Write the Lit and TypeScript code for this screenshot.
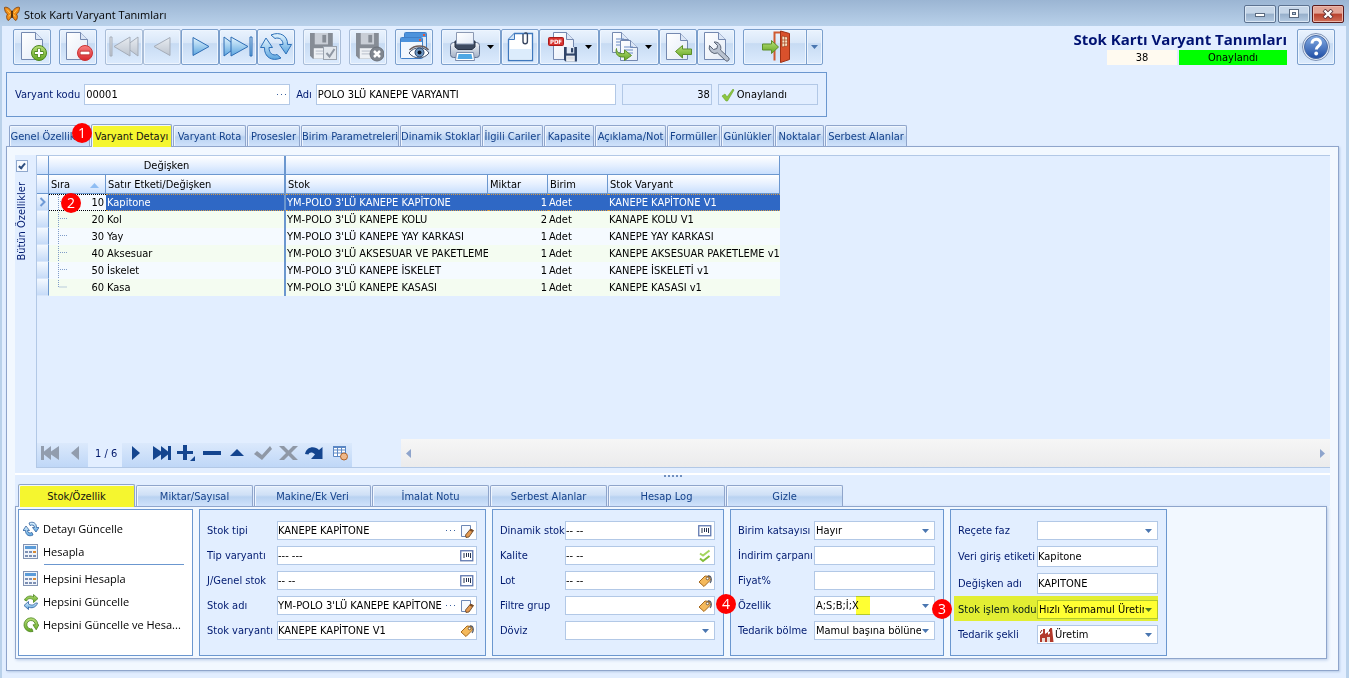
import { LitElement, html, svg, css, nothing } from "lit";
import type { TemplateResult } from "lit";
import { customElement, state } from "lit/decorators.js";
import { classMap } from "lit/directives/class-map.js";
import { styleMap } from "lit/directives/style-map.js";

/* ---------- icon library ---------- */

const icon = (w: number, h: number, body: unknown) =>
  html`<svg width=${w} height=${h} viewBox="0 0 ${w} ${h}" aria-hidden="true">${body}</svg>`;

const sheet = (x: number, y: number, w: number, h: number, fill = "url(#pg)") => svg`
  <path d="M${x} ${y}h${w - 7}l7 7v${h - 7}h-${w}z" fill=${fill} stroke="#7489b0" stroke-linejoin="round"/>
  <path d="M${x + w - 7} ${y}v7h7" fill="#dbe6f6" stroke="#7489b0" stroke-linejoin="round"/>`;

const defs = svg`<defs>
  <linearGradient id="pg" x2="1" y2="1"><stop stop-color="#fff"/><stop offset="1" stop-color="#e3ebf7"/></linearGradient>
  <linearGradient id="bl" x2="0" y2="1"><stop stop-color="#e4f5fe"/><stop offset="1" stop-color="#5ba5df"/></linearGradient>
  <linearGradient id="gr" x2="0" y2="1"><stop stop-color="#b9e07a"/><stop offset="1" stop-color="#63a621"/></linearGradient>
  <linearGradient id="gy" x2="0" y2="1"><stop stop-color="#e8ecf1"/><stop offset="1" stop-color="#bcc4cf"/></linearGradient>
  <linearGradient id="rd" x2="0" y2="1"><stop stop-color="#f98080"/><stop offset="1" stop-color="#d6262b"/></linearGradient>
  <linearGradient id="nv" x2="0" y2="1"><stop stop-color="#86aee4"/><stop offset="1" stop-color="#1f4ea6"/></linearGradient>
  <linearGradient id="pr" x2="0" y2="1"><stop stop-color="#f4f7fb"/><stop offset="1" stop-color="#a3b0c6"/></linearGradient>
</defs>`;

const floppy = (x: number, y: number, s: number, c: string, lite: string) => svg`
  <g transform="translate(${x} ${y}) scale(${s})">
    <path d="M0 0h24v27H3l-3-3z" fill=${c}/>
    <path d="M5 0h14v12H5z" fill=${lite}/><path d="M13 2h4v8h-4z" fill=${c}/>
    <path d="M4 16h16v11H4z" fill="#eef1f5"/><path d="M6 19h12M6 22h12" stroke="#b4bcc8"/>
  </g>`;

const I: Record<string, () => TemplateResult> = {
  add: () => icon(32, 32, svg`${defs}${sheet(5.5, 1.5, 21, 27)}
    <circle cx="23" cy="22" r="7.5" fill="url(#gr)" stroke="#4d8522"/>
    <path d="M23 17.500v9M18.500 22h9" stroke="#4d8522" stroke-width="4"/><path d="M23 18v8M19 22h8" stroke="#fff" stroke-width="2.200"/>`),
  remove: () => icon(32, 32, svg`${defs}${sheet(4.5, 1.5, 21, 27)}
    <circle cx="23" cy="22" r="7.500" fill="url(#rd)" stroke="#c33"/><path d="M18 22h10" stroke="#b22" stroke-width="4.500"/><path d="M18.500 22h9" stroke="#fff" stroke-width="2.800"/>`),
  first: () => icon(32, 32, svg`${defs}<g fill="url(#gy)" stroke="#a5adb9"><path d="M30 6v19L17 15.500z"/><path d="M22 6v19L6 15.500z"/><path d="M2 6h2v19H2z"/></g>`),
  prev: () => icon(32, 32, svg`${defs}<path d="M24 6.500v18L8 15.500z" fill="url(#gy)" stroke="#a5adb9"/>`),
  next: () => icon(32, 32, svg`${defs}<path d="M9 6.500v18l16-9z" fill="url(#bl)" stroke="#2e6db4"/>`),
  last: () => icon(32, 32, svg`${defs}<g fill="url(#bl)" stroke="#2e6db4"><path d="M2 6v19l13-9.500z"/><path d="M9 6v19l17-9.500z"/><path d="M28 6h2v19h-2z"/></g>`),
  refresh: () => icon(32, 32, svg`${defs}<g fill="url(#bl)" stroke="#2d70b8" stroke-linejoin="round">
    <path d="M11 4c9-4 17 1 16.500 9.500H31.500l-5.500 9.500-6.500-9.500h3.500c0-5-4-7.500-8-6z"/>
    <path d="M21 27C12 31 4 26 4.500 16.500H.5L6 7l6.500 9.500H9c0 6 4 8.500 8 7z"/></g>`),
  saveOk: () => icon(32, 32, svg`${floppy(4, 2, 0.95, "#868c95", "#c9ced6")}
    <rect x="17.500" y="15.500" width="13" height="13" fill="#e2e7ed" stroke="#9aa2ad"/><path d="M20.500 22l3 3.500 5-7.500" fill="none" stroke="#8f97a3" stroke-width="2"/>`),
  saveX: () => icon(32, 32, svg`${floppy(4, 2, 0.95, "#868c95", "#c9ced6")}
    <circle cx="25" cy="23" r="7" fill="#80868f" stroke="#6b717a"/><path d="M22 20l6 6m0-6l-6 6" stroke="#fff" stroke-width="2.500"/>`),
  preview: () => icon(32, 32, svg`${defs}<rect x="6.500" y="1.500" width="22" height="17" rx="1" fill="#d9e8fa" stroke="#3f7fc8"/><path d="M7 2h21v4H7z" fill="#4d93dc"/>
    <rect x="2.500" y="6.500" width="22" height="21" rx="1" fill="#f1f7fe" stroke="#3f7fc8"/><path d="M3 7h21v4H3z" fill="#4d93dc"/><path d="M25 3h2v2h-2zM21 8h2v2h-2z" fill="#e0573e"/>
    <path d="M11 22c5-7 16-7 20 0-5 6.500-15 6.500-20 0z" fill="#fff" stroke="#40506b"/><path d="M11.500 19c5-5.500 15-5.500 19 0" fill="none" stroke="#6d5e5c" stroke-width="1.500"/>
    <circle cx="21.500" cy="21.500" r="4.500" fill="#6a94bf" stroke="#24406a"/><circle cx="21.500" cy="21.500" r="2" fill="#0c1626"/>`),
  print: () => icon(32, 32, svg`${defs}<rect x="1.500" y="11.500" width="29" height="15" rx="3" fill="url(#pr)" stroke="#5f7090"/>
    <path d="M6 10h20v6l-3 2.500H9L6 16z" fill="#3d4a60" stroke="#2a3447"/><path d="M7.500 13V1.500h17V13z" fill="url(#pg)" stroke="#8b99b3"/>
    <path d="M7.500 21.500h17l1 8h-19z" fill="#fff" stroke="#7c8cab"/><path d="M9.500 23h13l1 5h-15z" fill="#4fa7e4"/>`),
  clip: () => icon(32, 32, svg`${defs}<path d="M4.500 8.500l6-6H28.500v27H4.500z" fill="#fff" stroke="#3f78bd" stroke-width="1.300"/><path d="M6 18h21.500v10.500H6z" fill="#dcecfc"/><path d="M4.500 8.500h6v-6" fill="#cfe3f7" stroke="#3f78bd"/>
    <path d="M19 3v7.500a2.200 2.200 0 0 0 4.400 0V3.500a1.600 1.600 0 0 0-3-.8" fill="none" stroke="#38465f" stroke-width="1.400"/>`),
  pdf: () => icon(32, 32, svg`${defs}${sheet(6.500, 1.500, 20, 27)}<rect x="1.500" y="6.500" width="15" height="8" rx="1" fill="#d8322e" stroke="#a81c1c"/>
    <text x="9" y="13" font-size="6" font-weight="700" fill="#fff" text-anchor="middle" font-family="DejaVu Sans Condensed, sans-serif">PDF</text>
    ${floppy(17, 16, 0.54, "#2f4468", "#dfe8f4")}`),
  copy: () => icon(32, 32, svg`${defs}${sheet(5.500, 1.500, 16, 20)}<path d="M9 8h8M9 11h8M9 14h8" stroke="#6b8cc4"/>${sheet(13.500, 9.500, 17, 20)}<path d="M17 16h9M17 19h9M17 22h9" stroke="#6b8cc4"/>
    <path d="M9.500 17.500c0 4 2 5.500 8 5v-3.500l7 5.500-7 5v-3.500c-7 .5-9.500-3-8-8.500z" fill="url(#gr)" stroke="#5c8f2a"/>`),
  import: () => icon(32, 32, svg`${defs}${sheet(4.500, 2.500, 21, 26)}<path d="M13.500 20.500l7-6v3.500h9v5.500h-9v3.500z" fill="url(#gr)" stroke="#5c8f2a"/>`),
  wrench: () => icon(32, 32, svg`${defs}${sheet(4.500, 1.500, 21, 27)}
    <path d="M14 11a6 6 0 0 1 6.500 8l8 7.500a2 2 0 0 1-3 3l-8-7.500a6 6 0 0 1-8-7.500l4 4 3.500-1 .5-3z" fill="#b9c2d0" stroke="#5a6476" stroke-linejoin="round"/>`),
  exit: () => icon(34, 34, svg`${defs}<path d="M16.500 30.500V2.500H24" fill="none" stroke="#cf5a31" stroke-width="2"/>
    <path d="M22.500 1l9 2.500v26l-9 3z" fill="#d9512c" stroke="#9e3216"/><path d="M24 6l5.500 1v9l-5.500 1z" fill="#f7e3c5" stroke="#a23a18" stroke-width=".7"/><path d="M26.700 6.500v10M24 10h5.500M24 13h5.500" stroke="#a23a18" stroke-width=".7"/>
    <path d="M20.500 17l-7-6.500V14h-9v6h9v3.500z" fill="url(#gr)" stroke="#5c8f2a"/>`),
  help: () => icon(32, 32, svg`${defs}<circle cx="16" cy="16" r="13.500" fill="#e4ecf7" stroke="#7d92b5"/><circle cx="16" cy="16" r="11.500" fill="url(#nv)" stroke="#4a6ba5"/>
    <path d="M12 12.500c0-5.500 8.500-5.500 8.500-.5 0 3-4.200 3.300-4.200 6.500" fill="none" stroke="#fff" stroke-width="3"/><circle cx="16.200" cy="22.500" r="1.900" fill="#fff"/>`),
  app: () => icon(16, 16, svg`<path d="M8 6C6 2 2 .5.500 1.500c0 3 1 5.500 3 6.500-1.500 2-1 5 .5 6.500C6 14 7.500 11 8 8.500 8.500 11 10 14 12 14.500c1.500-1.500 2-4.500.5-6.500 2-1 3-3.500 3-6.500C14 .5 10 2 8 6z" fill="#f08d17" stroke="#7a3c08" stroke-width=".8"/>
    <path d="M3 3.500l3 3.500M13 3.500L10 7M5 10.500l1.500-2M11 10.500l-1.500-2" stroke="#ffcf5c"/><path d="M8 5v7" stroke="#3b2208" stroke-width="1.500"/>`),
  check: () => icon(14, 14, svg`<path d="M1 8l3-2 2 3 6-8 1 1-6.500 11H5z" fill="#8cc63f" stroke="#6aa52b" stroke-width=".6"/>`),
  edit: () => icon(14, 14, svg`<path d="M1.500 1.500h9v7l-3 4h-6z" fill="#f7faff" stroke="#6d87b5"/><path d="M5.500 11l5-6 3 1.500-4.500 6.500-3 .5z" fill="#e39a52" stroke="#5d3b1d" stroke-width=".8"/><path d="M10.500 5l3 1.500-1 1.500-3-1.500z" fill="#7a4b24"/>`),
  code: () => icon(14, 14, svg`<rect x=".75" y="1.750" width="12" height="10" fill="#fff" stroke="#5f78b0" stroke-width="1.300"/><path d="M4 4v5M6.500 4v4M8.500 4v4M10.500 4v5" stroke="#26324d"/>`),
  tag: () => icon(14, 14, svg`<path d="M1 8l6-6 4.500.5 1 3.500-6.500 6.500z" fill="#f4b95c" stroke="#a5681c" stroke-linejoin="round"/><circle cx="9.500" cy="4.500" r="1.300" fill="#fff" stroke="#5d4630" stroke-width=".8"/><path d="M10 2c3-1 4.500 4 2 7" fill="none" stroke="#4c5566" stroke-width="1.100"/>`),
  checks: () => icon(14, 14, svg`<path d="M2 4.500l3 2 6.500-5" fill="none" stroke="#a4d65e" stroke-width="2"/><path d="M2 9.500l3 2.500 6.500-5" fill="none" stroke="#82bd3b" stroke-width="2"/>`),
  factory: () => icon(14, 14, svg`<path d="M0 14V7l3-2V1h2v5l3-2v3l2-2V0h2l1.500 14z" fill="#b2392b"/><path d="M2 10h3v4H2zM7 9h3v5H7z" fill="#e9d9d3"/><path d="M2 2L0 5M10 1L9 4" stroke="#7a1d14"/>`),
  mSync: () => icon(16, 16, svg`${defs}<g fill="url(#bl)" stroke="#2d5f9e" stroke-width=".8"><path d="M6 2c4-2 7.500 0 7.500 4.500H16L13 11 9.500 6.500h2C11.500 4 9 3.500 7 4.500z"/><path d="M10 14c-4 2-7.500 0-7.500-4.500H0L3 5l3.500 4.500h-2C4.500 12 7 12.500 9 11.500z"/></g>`),
  mCalc: () => icon(16, 16, svg`<rect x=".5" y=".5" width="14" height="14" fill="#f0f4fa" stroke="#8193b3"/><path d="M2 2h11v3H2z" fill="#5b9bd8"/><g fill="#7d8fb3"><path d="M2 7h3v2H2zM6 7h3v2H6zM2 11h3v2H2zM6 11h3v2H6zM10 11h3v2h-3z"/></g><path d="M10 7h3v2h-3z" fill="#d88a35"/>`),
  mSwap: () => icon(16, 16, svg`${defs}<path d="M1.500 6C3 2 8 1 10.500 3V.5L15 4.500l-4.500 4V6C8 4 5 4 3.500 7z" fill="url(#gr)" stroke="#4d8522" stroke-width=".8"/><path d="M14.500 9c-1.500 5-6.500 5.500-9 4v2.500L1 11.500l4.500-4V10c2.500 1.500 5.500 1.500 7-1z" fill="url(#bl)" stroke="#2d5f9e" stroke-width=".8"/>`),
  mRound: () => icon(16, 16, svg`${defs}<path d="M8 .8a7 7 0 1 0 2 13.700l-1-2.700a4.200 4.200 0 1 1 3.200-4H10l3.200 5 2.700-5h-1A7 7 0 0 0 8 .8z" fill="url(#gr)" stroke="#4d8522" stroke-width=".8"/>`),
};

/* record navigator glyphs, drawn on a 22x18 cell */
const NAV: Record<string, unknown> = {
  first: svg`<path d="M2 2h3v5.500L12 2v5.500L20 2v14l-8-5.500V16l-7-5.500V16H2z" fill="#929dae"/>`,
  prev: svg`<path d="M15 2v14L7 9z" fill="#929dae"/>`,
  next: svg`<path d="M8 2v14l8-7z" fill="#14458f"/>`,
  last: svg`<path d="M21 2h-3v5.500L11 2v5.500L3 2v14l8-5.500V16l7-5.500V16h3z" fill="#14458f"/>`,
  plus: svg`<path d="M8 1h4v6h6v3h-6v6H8v-6H2V7h6z" fill="#14458f"/><path d="M20 12v5h-5z" fill="#14458f"/>`,
  minus: svg`<path d="M2 7h18v4H2z" fill="#14458f"/>`,
  up: svg`<path d="M4 12l7-7 7 7z" fill="#14458f"/>`,
  ok: svg`<path d="M2 10l3-3 5 4 8-9 2 3-10 11z" fill="#8f98a6"/>`,
  cancel: svg`<path d="M2 2h5l4.500 4.500L16 2h5l-7 7 7 7h-5l-4.500-4.500L7 16H2l7-7z" fill="#8f98a6"/>`,
  redo: svg`<path d="M2 10c2-8 10-8 14-4l3.500-3v12H8l4-4.500c-3-3-6-2-6.500 0z" fill="#14458f"/>`,
  layout: svg`<path d="M5.500 2.500h12v10h-12zM5.500 6h12M9.500 3v9M13.500 3v9M6 9h12" fill="#fff" stroke="#5b87c4"/><path d="M5 2h13v2H5z" fill="#5b87c4"/><circle cx="16" cy="12.500" r="3.500" fill="#f0b98a" stroke="#b0642a"/>`,
};

/* ---------- data ---------- */

type Field = {
  label: string;
  value: string;
  kind: "text" | "pick" | "select";
  icon?: string;
  dots?: boolean;
  lead?: string;
  mark?: boolean;
  hot?: boolean;
};

const MAIN_TABS: [string, number][] = [
  ["Genel Özellikler", 81], ["Varyant Detayı", 81], ["Varyant Rota", 73], ["Prosesler", 53],
  ["Birim Parametreleri", 98], ["Dinamik Stoklar", 81], ["İlgili Cariler", 61], ["Kapasite", 50],
  ["Açıklama/Not", 71], ["Formüller", 53], ["Günlükler", 53], ["Noktalar", 49], ["Serbest Alanlar", 82],
];

const DETAIL_TABS = ["Stok/Özellik", "Miktar/Sayısal", "Makine/Ek Veri", "İmalat Notu", "Serbest Alanlar", "Hesap Log", "Gizle"];

const ROWS: [number, string, string, number, string, string][] = [
  [10, "Kapitone", "YM-POLO 3'LÜ KANEPE KAPİTONE", 1, "Adet", "KANEPE KAPİTONE V1"],
  [20, "Kol", "YM-POLO 3'LÜ KANEPE KOLU", 2, "Adet", "KANAPE KOLU V1"],
  [30, "Yay", "YM-POLO 3'LÜ KANEPE YAY KARKASI", 1, "Adet", "KANEPE YAY KARKASI"],
  [40, "Aksesuar", "YM-POLO 3'LÜ AKSESUAR VE PAKETLEME", 1, "Adet", "KANEPE AKSESUAR PAKETLEME v1"],
  [50, "İskelet", "YM-POLO 3'LÜ KANEPE İSKELET", 1, "Adet", "KANEPE İSKELETİ v1"],
  [60, "Kasa", "YM-POLO 3'LÜ KANEPE KASASI", 1, "Adet", "KANEPE KASASI v1"],
];

const MENU: ([string, string] | null)[] = [
  ["mSync", "Detayı Güncelle"], ["mCalc", "Hesapla"], null,
  ["mCalc", "Hepsini Hesapla"], ["mSwap", "Hepsini Güncelle"], ["mRound", "Hepsini Güncelle ve Hesa..."],
];

const PANELS: { cls: string; step?: number; fields: Field[] }[] = [
  { cls: "p1", fields: [
    { label: "Stok tipi", value: "KANEPE KAPİTONE", kind: "pick", icon: "edit", dots: true },
    { label: "Tip varyantı", value: "--- ---", kind: "pick", icon: "code" },
    { label: "J/Genel stok", value: "-- --", kind: "pick", icon: "code" },
    { label: "Stok adı", value: "YM-POLO 3'LÜ KANEPE KAPİTONE", kind: "pick", icon: "edit", dots: true },
    { label: "Stok varyantı", value: "KANEPE KAPİTONE V1", kind: "pick", icon: "tag" },
  ] },
  { cls: "p2", fields: [
    { label: "Dinamik stok", value: "-- --", kind: "pick", icon: "code" },
    { label: "Kalite", value: "-- --", kind: "pick", icon: "checks" },
    { label: "Lot", value: "-- --", kind: "pick", icon: "tag" },
    { label: "Filtre grup", value: "", kind: "pick", icon: "tag" },
    { label: "Döviz", value: "", kind: "select" },
  ] },
  { cls: "p3", step: 4, fields: [
    { label: "Birim katsayısı", value: "Hayır", kind: "select" },
    { label: "İndirim çarpanı", value: "", kind: "text" },
    { label: "Fiyat%", value: "", kind: "text" },
    { label: "Özellik", value: "A;S;B;İ;X", kind: "select", mark: true },
    { label: "Tedarik bölme", value: "Mamul başına bölüne", kind: "select" },
  ] },
  { cls: "p4", step: 3, fields: [
    { label: "Reçete faz", value: "", kind: "select" },
    { label: "Veri giriş etiketi", value: "Kapitone", kind: "text" },
    { label: "Değişken adı", value: "KAPITONE", kind: "text" },
    { label: "Stok işlem kodu", value: "Hızlı Yarımamul Üretir", kind: "select", hot: true },
    { label: "Tedarik şekli", value: "Üretim", kind: "select", lead: "factory" },
  ] },
];

type Tool = { id: string; name: string; off?: boolean; menu?: boolean };
const TOOLS: Tool[][] = [
  [{ id: "add", name: "Yeni" }],
  [{ id: "remove", name: "Sil" }],
  [{ id: "first", name: "İlk", off: true }, { id: "prev", name: "Önceki", off: true }, { id: "next", name: "Sonraki" }, { id: "last", name: "Son" }, { id: "refresh", name: "Yenile" }],
  [{ id: "saveOk", name: "Kaydet", off: true }],
  [{ id: "saveX", name: "Vazgeç", off: true }],
  [{ id: "preview", name: "Önizleme" }],
  [{ id: "print", name: "Yazdır", menu: true }, { id: "clip", name: "Ekler" }, { id: "pdf", name: "PDF", menu: true }, { id: "copy", name: "Kopyala", menu: true }, { id: "import", name: "Aktar" }, { id: "wrench", name: "Ayarlar" }],
];

const caret = (cls: string) => html`<svg class=${cls} width="7" height="4" viewBox="0 0 7 4" aria-hidden="true"><path d="M0 0h7L3.500 4z" fill="currentColor"/></svg>`;

const ellipsis = () => html`<svg width="9" height="2" viewBox="0 0 9 2" aria-hidden="true"><path d="M0 0h1v1H0zM4 0h1v1H4zM8 0h1v1H8z" fill="#3c62a0"/></svg>`;

@customElement("app-root")
export class AppRoot extends LitElement {
  static styles = css`
    :host {
      display: flex;
      flex-direction: column;
      min-height: 100vh;
      box-sizing: border-box;
      font: 11px/14px "DejaVu Sans Condensed", "DejaVu Sans", sans-serif;
      color: #000;
      background: #e2eeff;
      --line: #6b97cf;
      --soft: #b2c8e6;
      --frame: #8fa5cb;
      --ink: #001a70;
    }
    *, *::before, *::after { box-sizing: border-box; }
    svg { display: block; flex: none; }
    button, input, select { font: inherit; color: inherit; margin: 0; padding: 0; border: 0; background: none; border-radius: 0; }

    .titlebar { display: flex; align-items: center; height: 26px; padding: 4px 5px 2px 4px; gap: 4px; background: linear-gradient(#9bb5d3, #b9d1ea); }
    .titlebar h1 { flex: 1; margin: 0; padding-top: 2px; font: 11px/16px "Open Sans", "Noto Sans", sans-serif; }
    .caps { display: flex; gap: 2px; }
    .cap { display: grid; place-items: center; width: 32px; height: 18px; border: 1px solid #5d7391; border-radius: 2px; background: linear-gradient(#c6d6e8 45%, #96afca 50%, #b5cbe3); box-shadow: inset 0 0 0 1px #dbe7f4; }
    .cap.close { border-color: #5a1a1c; background: linear-gradient(#e2a496 45%, #b8402c 50%, #d1705a); box-shadow: inset 0 0 0 1px #ecb9ad; }

    .client { flex: 1; display: flex; flex-direction: column; border: solid #b9d1ea; border-width: 0 3px 0 2px; padding: 3px 7px 7px 4px; }
    .top { display: flex; align-items: flex-start; padding: 0 4px 0 7px; }
    .tools { display: flex; gap: 8px; flex: 1; }
    .group { display: flex; }
    .tool { display: flex; align-items: center; justify-content: center; width: 38px; height: 36px; border: 1px solid #7b9fcc; border-radius: 2px; background: linear-gradient(#eaf3fe, #d9e7f8 38%, #c7dbf3 40%, #dcebfd); box-shadow: inset 0 0 0 1px #eef5fe; }
    .tool:disabled { border-color: #a9bdd8; }
    .tool.wide { width: 60px; gap: 6px; }
    .split { width: 64px; border-radius: 2px 0 0 2px; }
    .drop { width: 17px; margin-left: -1px; border-radius: 0 2px 2px 0; color: #4a76b0; }
    .status { display: grid; grid-template-columns: 70px 108px; column-gap: 2px; justify-content: end; margin-right: 10px; text-align: center; line-height: 15px; }
    .status strong { grid-column: 1 / -1; justify-self: end; font: 700 15px/21px "Open Sans", "Noto Sans", sans-serif; color: #001272; white-space: nowrap; }
    .num { background: #fffaf0; }
    .ok { background: #00ff00; }

    .head { display: flex; align-items: center; align-self: flex-start; height: 45px; margin-top: 7px; padding: 0 8px; border: 1px solid var(--line); }
    .head label { color: var(--ink); margin-right: 4px; }
    .box { display: flex; align-items: center; height: 21px; border: 1px solid var(--soft); background: #fff; margin-right: 6px; }
    .box input { width: 100%; min-width: 0; height: 100%; padding: 0 1px; outline: none; }
    .w206 { width: 206px; } .w300 { width: 300px; } .w90 { width: 90px; } .w100 { width: 100px; margin-right: 0; }
    .plain { background: transparent; }
    .plain input { text-align: right; }
    .okline { gap: 2px; padding-left: 2px; line-height: 19px; }
    .dots { flex: none; display: grid; place-items: center; width: 16px; height: 100%; }

    .tabs { display: flex; align-items: flex-end; gap: 1px; }
    .tabs.main { margin: 7px 0 0 3px; }
    .tab { position: relative; flex: none; height: 21px; padding-top: 2px; border: 1px solid var(--frame); border-bottom: 0; border-radius: 2px 2px 0 0; color: #15428b; background: linear-gradient(#e3eefc, #cfe0f6 45%, #b9d2f1 55%, #cfe2fb); box-shadow: inset 1px 1px 0 #f0f6fe; text-align: center; white-space: nowrap; }
    .tab.on { height: 23px; margin-bottom: -1px; padding-bottom: 1px; color: #111; background: #f5f62f; z-index: 1; }
    .badge { position: absolute; z-index: 3; display: grid; place-items: center; width: 20px; height: 20px; border-radius: 50%; background: #ff0000; color: #fff; font: 14px/20px "Open Sans", "Noto Sans", sans-serif; pointer-events: none; }
    .b1 { right: -3px; top: -3px; }
    .b2 { left: 12px; top: -2px; }
    .b3 { left: -26px; top: -1px; }
    .b4 { left: -22px; top: -2px; }

    .page { flex: 1; display: flex; flex-direction: column; border: 1px solid var(--frame); background: #f2f8ff; padding: 8px 8px 11px; box-shadow: 1px 1px 2px #b5c9e6; }
    .upper { flex: 1; display: flex; background: #e2eeff; }
    .rail { display: flex; flex-direction: column; align-items: center; gap: 10px; width: 21px; padding: 5px 7px 0 0; color: var(--ink); }
    .rail label { writing-mode: vertical-rl; transform: rotate(180deg); }
    .tick { appearance: none; width: 12px; height: 12px; border: 1px solid #8fa8cd; background: #f7fafe; display: grid; place-items: center; }
    .tick:checked::before { content: ""; width: 4px; height: 7px; margin-top: -2px; border: solid #2e4f80; border-width: 0 2px 2px 0; transform: rotate(40deg); }
    .gridbox { flex: 1; display: flex; flex-direction: column; border: solid var(--soft); border-width: 1px 0 1px 1px; }
    .fill { flex: 1; }

    table { border-collapse: separate; border-spacing: 0; table-layout: fixed; width: 743px; }
    th { height: 19px; padding: 2px 2px 0; font-weight: 400; line-height: 16px; text-align: left; border: solid var(--line); border-width: 0 1px 1px 0; background: linear-gradient(#ffffff, #e6f0ff 50%, #c9dffd); }
    th.c { text-align: center; }
    td { height: 17px; padding: 0 1px; line-height: 17px; white-space: nowrap; overflow: hidden; }
    tr td { background: #f5faff; }
    tr:nth-child(even) td { background: #f4fcf1; }
    tbody td.ind { padding: 0 0 0 2px; border-right: 1px solid var(--line); border-bottom: 1px solid #d8e6fa; background: linear-gradient(#f4f9ff, #c6dbf8); }
    th.v, td.v { border-right: 2px solid var(--line); }
    td.r { text-align: right; padding-right: 1px; }
    tr.sel td.cell { background: #2f68c5; color: #fff; border: dotted #d79b45; border-width: 1px 0; line-height: 15px; }
    tr.sel td.v { border-right: 2px solid var(--line); }
    td.seq { position: relative; overflow: visible; padding-right: 2px; }
    tr.sel td.seq { border: dotted #000; border-width: 1px 0; line-height: 15px; }
    .seqin { display: flex; justify-content: space-between; align-items: center; padding-left: 8px; }
    .sorthead { display: flex; justify-content: space-between; align-items: center; padding-right: 4px; color: #8fbdf3; }
    .sorthead span { color: #000; }

    .navbar { display: flex; align-items: stretch; height: 28px; }
    .nav { display: flex; align-items: center; align-self: flex-end; height: 24px; width: 315px; margin-right: 49px; background: linear-gradient(#dbe9fc, #bfd7f7); }
    .nav button { display: grid; place-items: center; width: 26px; height: 24px; padding-bottom: 5px; }
    .nav output { width: 35px; height: 24px; padding-left: 2px; line-height: 22px; text-align: center; background: #e2eeff; color: #00186b; }
    .hbar { flex: 1; display: flex; align-items: center; justify-content: space-between; padding: 0 5px; background: linear-gradient(#f6f6f6, #ebebec); color: #8ea4cc; }

    .splitter { display: grid; place-items: center; height: 11px; margin-top: 5px; border-top: 2px solid #fff; background: #e2eeff; }
    .splitrow { background: #e2eeff; }
    .grip { display: flex; gap: 2px; align-self: start; }
    .grip i { width: 2px; height: 2px; background: #6f8fc0; }
    .tabs.sub { padding-left: 3px; background: #e2eeff; }
    .tabs.sub .tab { width: 117px; }
    .lower { display: flex; gap: 6px; margin-right: 3px; padding: 2px; border: 1px solid var(--frame); background: #f2f8ff; box-shadow: 1px 1px 3px #b5c9e6; }
    .panel { display: flex; flex-direction: column; border: 1px solid var(--line); background: #e2eeff; height: 147px; padding: 11px 8px 0 7px; gap: 6px; }
    .menu { width: 175px; background: #fff; padding: 7px 4px 0; gap: 0; font: 11px/16px "Open Sans", "Noto Sans", sans-serif; }
    .menu button { display: flex; align-items: center; gap: 4px; height: 23px; text-align: left; white-space: nowrap; }
    .menu hr { width: 140px; height: 1px; margin: 1px 4px 2px auto; border: 0; background: var(--line); }
    .p1 { width: 287px; } .p2 { width: 232px; } .p3 { width: 214px; } .p4 { width: 217px; }
    .row { position: relative; display: flex; align-items: center; }
    .row label { flex: 1; color: var(--ink); white-space: nowrap; }
    .fld { position: relative; display: flex; align-items: center; flex: none; height: 19px; border: 1px solid var(--soft); background: #fff; }
    .p1 .fld { width: 200px; } .p2 .fld { width: 150px; } .p3 .fld { width: 121px; } .p4 .fld { width: 121px; }
    .p4 .fld.text { height: 21px; }
    .fld input { flex: 1; min-width: 0; height: 100%; outline: none; }
    .fld select { appearance: none; flex: 1; min-width: 0; width: 100%; height: 100%; padding: 0 13px 0 1px; outline: none; overflow: hidden; }
    .fld .arrow { position: absolute; right: 5px; top: 7px; color: #4a76b0; pointer-events: none; }
    .ficon { display: grid; place-items: center; flex: none; width: 18px; height: 100%; }
    .lead { padding-left: 2px; }
    .mark { position: absolute; left: 41px; top: -1px; width: 14px; height: 19px; background: #ffff33; mix-blend-mode: multiply; pointer-events: none; }
    .hot::after { content: ""; position: absolute; inset: -4px 0 -2px -4px; background: #ffff33; mix-blend-mode: multiply; pointer-events: none; }
  `;

  @state() private tab = 1;
  @state() private sub = 0;
  @state() private row = 0;

  private renderTitle() {
    return html`<header class="titlebar">
      ${I.app()}
      <h1>Stok Kartı Varyant Tanımları</h1>
      <div class="caps">
        <button class="cap" aria-label="Simge durumuna küçült">${icon(12, 10, svg`<rect x="1.500" y="4.500" width="9" height="3" fill="#fff" stroke="#5a6a80"/>`)}</button>
        <button class="cap" aria-label="Ekranı kapla">${icon(12, 10, svg`<rect x="1.500" y=".5" width="9" height="8" fill="#fff" stroke="#5a6a80"/><rect x="4.500" y="3.500" width="3" height="2" fill="#b9cde4" stroke="#5a6a80"/>`)}</button>
        <button class="cap close" aria-label="Kapat">${icon(12, 10, svg`<path d="M2 1l8 8m0-8L2 9" stroke="#5d3338" stroke-width="4"/><path d="M2.500 1.500l7 7m0-7l-7 7" stroke="#fff" stroke-width="2.400"/>`)}</button>
      </div>
    </header>`;
  }

  private renderTools() {
    return html`<div class="top">
      <div class="tools" role="toolbar" aria-label="Araçlar">
        ${TOOLS.map((g) => html`<div class="group">${g.map((t) => html`
          <button class=${classMap({ tool: true, wide: !!t.menu })} aria-label=${t.name} ?disabled=${!!t.off}>${I[t.id]()}${t.menu ? caret("dd") : nothing}</button>`)}</div>`)}
        <div class="group">
          <button class="tool split" aria-label="Çıkış">${I.exit()}</button>
          <button class="tool drop" aria-label="Çıkış seçenekleri">${caret("dd")}</button>
        </div>
      </div>
      <div class="status">
        <strong>Stok Kartı Varyant Tanımları</strong>
        <span class="num">38</span><span class="ok">Onaylandı</span>
      </div>
      <button class="tool" aria-label="Yardım">${I.help()}</button>
    </div>`;
  }

  private renderHead() {
    return html`<section class="head">
      <label for="code">Varyant kodu</label>
      <div class="box w206"><input id="code" .value=${"00001"} /><button class="dots" aria-label="Varyant seç">${ellipsis()}</button></div>
      <label for="name">Adı</label>
      <div class="box w300"><input id="name" .value=${"POLO 3LÜ KANEPE VARYANTI"} /></div>
      <div class="box w90 plain"><input aria-label="Kayıt no" readonly .value=${"38"} /></div>
      <div class="box w100 plain okline">${I.check()}<span>Onaylandı</span></div>
    </section>`;
  }

  private renderTable() {
    return html`<table>
      <colgroup>${[12, 57, 180, 202, 60, 60, 172].map((w) => html`<col style=${styleMap({ width: `${w}px` })} />`)}</colgroup>
      <thead>
        <tr><th></th><th class="c v" colspan="2">Değişken</th><th colspan="4"></th></tr>
        <tr><th></th>
          <th><div class="sorthead"><span>Sıra</span><svg width="9" height="5" viewBox="0 0 9 5"><path d="M0 5h9L4.500 0z" fill="currentColor"/></svg></div></th>
          <th class="v">Satır Etketi/Değişken</th><th>Stok</th><th>Miktar</th><th>Birim</th><th>Stok Varyant</th></tr>
      </thead>
      <tbody>
        ${ROWS.map((r, i) => html`<tr class=${classMap({ sel: i === this.row })} @click=${() => (this.row = i)}>
          <td class="ind">${i === this.row ? icon(8, 10, svg`<path d="M1.500 1l4 4-4 4" fill="none" stroke="#6f9ad6" stroke-width="2"/>`) : nothing}</td>
          <td class="seq">
            <div class="seqin"><svg width="9" height="15" viewBox="0 0 9 15"><path d=${i === ROWS.length - 1 ? "M.5 0v7H9" : "M.5 0v15M0 6.500h9"} fill="none" stroke="#7f9cc8" stroke-dasharray="1 1"/></svg><span>${r[0]}</span></div>
            ${i === 0 ? html`<span class="badge b2">2</span>` : nothing}
          </td>
          <td class="cell v">${r[1]}</td><td class="cell">${r[2]}</td><td class="cell r">${r[3]}</td><td class="cell">${r[4]}</td><td class="cell">${r[5]}</td>
        </tr>`)}
      </tbody>
    </table>`;
  }

  private navBtn(id: string, name: string) {
    return html`<button aria-label=${name}>${icon(22, 18, NAV[id])}</button>`;
  }

  private renderField(f: Field, p: (typeof PANELS)[number], i: number) {
    const id = `${p.cls}-${i}`;
    const control = f.kind === "select"
      ? html`${f.lead ? html`<span class="lead">${I[f.lead]()}</span>` : nothing}
          <select id=${id}><option>${f.value}</option></select>${caret("arrow")}
          ${f.mark ? html`<span class="mark"></span>` : nothing}`
      : html`<input id=${id} .value=${f.value} />
          ${f.dots ? html`<button class="dots" aria-label="Seç">${ellipsis()}</button>` : nothing}
          ${f.icon ? html`<button class="ficon" aria-label=${`${f.label} aç`}>${I[f.icon]()}</button>` : nothing}`;
    return html`<div class=${classMap({ row: true, hot: !!f.hot })}>
      ${p.step && i === 3 ? html`<span class="badge b${p.step}">${p.step}</span>` : nothing}
      <label for=${id}>${f.label}</label>
      <div class="fld ${f.kind}">${control}</div>
    </div>`;
  }

  render() {
    return html`${this.renderTitle()}
      <main class="client">
        ${this.renderTools()}
        ${this.renderHead()}
        <div class="tabs main" role="tablist">
          ${MAIN_TABS.map(([t, w], i) => html`<button role="tab" class=${classMap({ tab: true, on: i === this.tab })} style=${styleMap({ width: `${w}px` })}
            @click=${() => (this.tab = i)}>${t}${i === 0 ? html`<span class="badge b1">1</span>` : nothing}</button>`)}
        </div>
        <section class="page">
          <div class="upper">
            <div class="rail"><input type="checkbox" class="tick" id="all" checked /><label for="all">Bütün Özellikler</label></div>
            <div class="gridbox">
              ${this.renderTable()}
              <div class="fill"></div>
              <div class="navbar">
                <div class="nav">
                  ${this.navBtn("first", "İlk kayıt")}${this.navBtn("prev", "Önceki kayıt")}
                  <output>1 / 6</output>
                  ${this.navBtn("next", "Sonraki kayıt")}${this.navBtn("last", "Son kayıt")}${this.navBtn("plus", "Ekle")}${this.navBtn("minus", "Sil")}${this.navBtn("up", "Düzenle")}${this.navBtn("ok", "Onayla")}${this.navBtn("cancel", "İptal")}${this.navBtn("redo", "Yenile")}${this.navBtn("layout", "Görünüm")}
                </div>
                <div class="hbar">
                  <svg width="5" height="9" viewBox="0 0 5 9"><path d="M5 0v9L0 4.500z" fill="currentColor"/></svg>
                  <svg width="5" height="9" viewBox="0 0 5 9"><path d="M0 0v9l5-4.500z" fill="currentColor"/></svg>
                </div>
              </div>
            </div>
          </div>
          <div class="splitrow"><div class="splitter"><span class="grip"><i></i><i></i><i></i><i></i><i></i></span></div></div>
          <div class="tabs sub" role="tablist">
            ${DETAIL_TABS.map((t, i) => html`<button role="tab" class=${classMap({ tab: true, on: i === this.sub })} @click=${() => (this.sub = i)}>${t}</button>`)}
          </div>
          <section class="lower">
            <div class="panel menu">
              ${MENU.map((m) => (m ? html`<button>${I[m[0]]()}<span>${m[1]}</span></button>` : html`<hr />`))}
            </div>
            ${PANELS.map((p) => html`<div class="panel ${p.cls}">${p.fields.map((f, i) => this.renderField(f, p, i))}</div>`)}
          </section>
        </section>
      </main>`;
  }
}
